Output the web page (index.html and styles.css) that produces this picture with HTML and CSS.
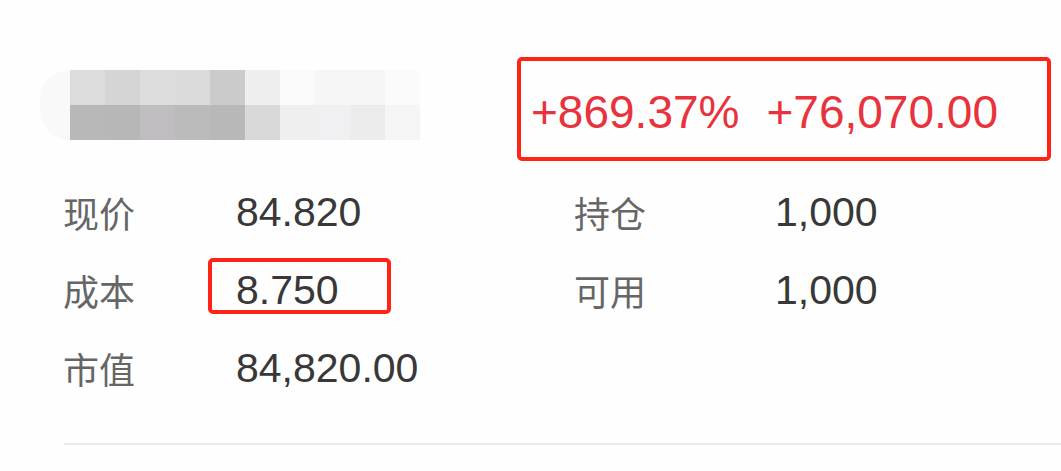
FILE: index.html
```html
<!DOCTYPE html>
<html lang="zh-CN">
<head>
  <meta charset="UTF-8" />
  <meta name="viewport" content="width=device-width, initial-scale=1.0" />
  <title>持仓详情</title>
  <link rel="stylesheet" href="styles.css">
</head>
<body>
  <div class="header">
    <div class="name-mask">
      <div class="mask-cap"></div>
      <div class="mask-cells">
        <div class="mask-row top"></div>
        <div class="mask-row bottom"></div>
      </div>
    </div>
    <div class="profit">
      <span>+869.37%</span>
      <span>+76,070.00</span>
    </div>
  </div>

  <div class="stats">
    <div class="label">现价</div>
    <div class="value">84.820</div>
    <div class="label">持仓</div>
    <div class="value">1,000</div>

    <div class="label">成本</div>
    <div class="value"><span class="marked">8.750</span></div>
    <div class="label">可用</div>
    <div class="value">1,000</div>

    <div class="label">市值</div>
    <div class="value">84,820.00</div>
  </div>

  <div class="divider"></div>
</body>
</html>
```

FILE: styles.css
```css
*,
*::before,
*::after {
  margin: 0;
  padding: 0;
  box-sizing: border-box;
}

body {
  background: #fefefe;
  font-family: 'Liberation Sans', Arial, sans-serif;
  color: #333;
}

.header {
  display: flex;
  align-items: flex-start;
  padding-top: 57px;
}

.name-mask {
  display: flex;
  margin-left: 40px;
  margin-top: 13px;
  height: 70px;
}

.mask-cap {
  width: 30px;
  background: #f9f9f9;
  border-radius: 35px 0 0 35px;
}

.mask-cells {
  width: 350px;
  display: flex;
  flex-direction: column;
}

.mask-row {
  height: 35px;
}

.mask-row.top {
  background: linear-gradient(to right,
    #dcdcdc 0 35px, #d5d5d5 35px 70px, #dcdcdc 70px 105px, #dbdbdb 105px 140px,
    #cbcbcb 140px 175px, #eeeeee 175px 210px, #fafafa 210px 245px, #f6f6f6 245px 280px,
    #f6f6f6 280px 315px, #fbfbfb 315px 350px);
}

.mask-row.bottom {
  background: linear-gradient(to right,
    #b8b8b8 0 35px, #b7b7b7 35px 70px, #bfbdbf 70px 105px, #bbbbbb 105px 140px,
    #b8b8b8 140px 175px, #d9d9d9 175px 210px, #efefef 210px 245px, #f0f0f2 245px 280px,
    #ececec 280px 315px, #f5f5f5 315px 350px);
}

.profit {
  margin-left: 97px;
  width: 534px;
  height: 104px;
  border: 4px solid #ff2416;
  border-radius: 5px;
  display: flex;
  align-items: center;
  gap: 27px;
  padding-left: 10px;
  padding-top: 6px;
  color: #e8323c;
  font-size: 46px;
}

.stats {
  display: grid;
  grid-template-columns: 173px 338px 201px auto;
  grid-auto-rows: 78px;
  align-items: center;
  margin-top: 12px;
  padding-left: 63px;
}

.label {
  font-family: 'Noto Sans CJK SC', 'Noto Sans', sans-serif;
  font-size: 36px;
  color: #666;
  line-height: 1;
}

.value {
  font-size: 41px;
  color: #383838;
  line-height: 1;
}

.marked {
  position: relative;
}

.marked::after {
  content: "";
  position: absolute;
  left: -28px;
  top: -9px;
  width: 183px;
  height: 56px;
  border: 4px solid #ff2416;
  border-radius: 5px;
}

.divider {
  margin-top: 36px;
  margin-left: 64px;
  height: 2px;
  background: #ebebeb;
  box-shadow: 0 3px 0 #f7f7f7;
}
```
